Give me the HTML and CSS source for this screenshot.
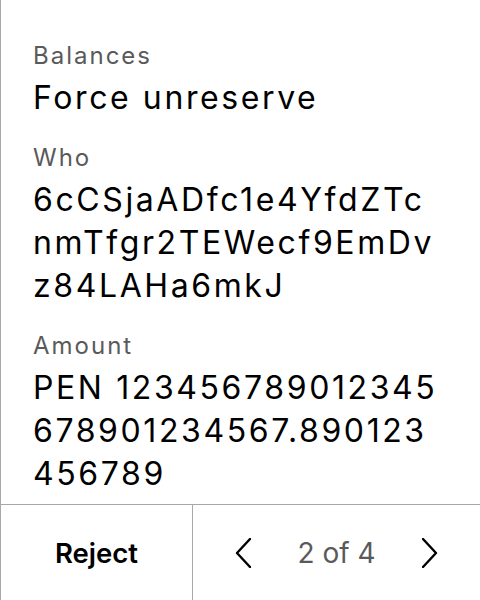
FILE: index.html
```html
<!DOCTYPE html>
<html>
<head>
<meta charset="utf-8">
<link rel="stylesheet" href="styles.css">
</head>
<body>
<div class="screen">
  <div class="content">
    <div class="field first">
      <div class="label">Balances</div>
      <div class="value">Force unreserve</div>
    </div>
    <div class="field">
      <div class="label">Who</div>
      <div class="value">6cCSjaADfc1e4YfdZTc<br>nmTfgr2TEWecf9EmDv<br>z84LAHa6mkJ</div>
    </div>
    <div class="field">
      <div class="label">Amount</div>
      <div class="value">PEN 123456789012345<br>678901234567.890123<br>456789</div>
    </div>
  </div>
  <div class="footer">
    <div class="reject">Reject</div>
    <div class="pager">
      <svg class="chev" width="16" height="30" viewBox="0 0 16 30"><polyline points="15,1 2,15 15,29" fill="none" stroke="#000" stroke-width="2.4" stroke-linecap="round" stroke-linejoin="round"/></svg>
      <span class="count">2 of 4</span>
      <svg class="chev" width="16" height="30" viewBox="0 0 16 30"><polyline points="1,1 14,15 1,29" fill="none" stroke="#000" stroke-width="2.4" stroke-linecap="round" stroke-linejoin="round"/></svg>
    </div>
  </div>
</div>
</body>
</html>
```
FILE: styles.css
```css
html, body {
  margin: 0;
  padding: 0;
  background: #fff;
}
.screen {
  width: 479px;
  height: 600px;
  border-left: 1px solid #a8a8a8;
  display: flex;
  flex-direction: column;
  font-family: Inter, "Noto Sans", sans-serif;
  color: #000;
}
.content {
  flex: 1;
  padding: 41px 0 0 32px;
  overflow: hidden;
  white-space: nowrap;
}
.field {
  margin-top: 24px;
}
.field.first {
  margin-top: 0;
}
.label {
  font-size: 24px;
  line-height: 30px;
  letter-spacing: 2px;
  color: #5a5a5a;
}
.value {
  font-size: 32px;
  line-height: 43px;
  letter-spacing: 2.6px;
  margin-top: 5px;
}
.footer {
  height: 95px;
  border-top: 1px solid #a8a8a8;
  display: flex;
}
.reject {
  width: 191px;
  border-right: 1px solid #a8a8a8;
  display: flex;
  align-items: center;
  justify-content: center;
  font-size: 27.5px;
  font-weight: 600;
}
.pager {
  flex: 1;
  display: flex;
  align-items: center;
  justify-content: space-between;
  padding: 0 42px;
}
.count {
  font-size: 28px;
  color: #5a5a5a;
}
.chev {
  display: block;
}
```
